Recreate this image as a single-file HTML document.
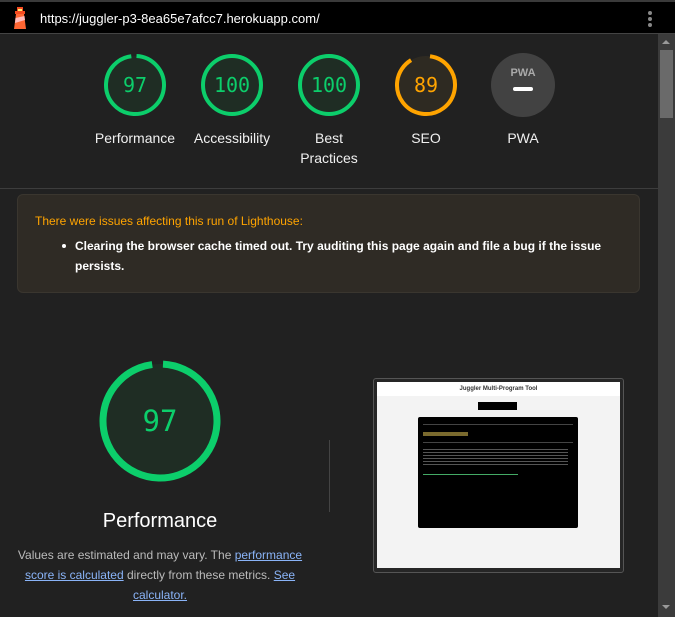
<!DOCTYPE html>
<html><head><meta charset="utf-8"><style>
*{margin:0;padding:0;box-sizing:border-box}
body{width:675px;height:617px;overflow:hidden;background:#212121;font-family:"Liberation Sans",Arial,sans-serif;position:relative;color:#eee}
.top{position:absolute;left:0;top:0;width:675px;height:34px;background:#000;border-top:2px solid #3a3a3a;border-bottom:1px solid #444}
.url{position:absolute;left:40px;top:9px;font-size:13px;color:#fff}
.g{position:absolute;top:53px;width:100px;text-align:center;font-size:14px;color:#f0f0f0;line-height:20px}
.g svg{display:block;margin:0 auto 11px}
.warn{position:absolute;left:17px;top:194px;width:623px;height:99px;background:#2f2b25;border:1px solid #3a362f;border-radius:6px}
a{color:#8ab4f8;text-decoration:underline}
</style></head><body>
<div class="top">
<svg style="position:absolute;left:11px;top:4px" width="18" height="24" viewBox="0 0 18 24"><rect x="6" y="1" width="6" height="4" fill="#f44b21"/><rect x="4" y="5" width="10" height="3" fill="#f44b21"/><rect x="7" y="3" width="4" height="2" fill="#fff176"/><path d="M5 8h8l2 15H3z" fill="#f63"/><path d="M4.5 12l9-2 .5 4-10 3z" fill="#fbb"/></svg>
<div class="url">https://juggler-p3-8ea65e7afcc7.herokuapp.com/</div>
<div style="position:absolute;left:648px;top:9px;width:4px"><div style="width:4px;height:4px;border-radius:2px;background:#888;margin-bottom:2px"></div><div style="width:4px;height:4px;border-radius:2px;background:#888;margin-bottom:2px"></div><div style="width:4px;height:4px;border-radius:2px;background:#888"></div></div>
</div>
<div style="position:absolute;left:658px;top:34px;width:17px;height:583px;background:#3b3b3b"></div>
<div style="position:absolute;left:660px;top:50px;width:13px;height:68px;background:#6a6a6a"></div>
<div style="position:absolute;left:662px;top:40px;width:0;height:0;border-left:4px solid transparent;border-right:4px solid transparent;border-bottom:4px solid #999"></div>
<div style="position:absolute;left:662px;top:605px;width:0;height:0;border-left:4px solid transparent;border-right:4px solid transparent;border-top:4px solid #999"></div>

<div class="g" style="left:85px"><svg width="64" height="64"><circle cx="32" cy="32" r="29" fill="#1f2d24"/><circle cx="32" cy="32" r="29" fill="none" stroke="#0cce6b" stroke-width="4" stroke-dasharray="176.7 182.2" transform="rotate(-87 32 32)"/><text x="32" y="39" text-anchor="middle" font-family="DejaVu Sans Mono,monospace" font-size="20" fill="#0cce6b">97</text></svg>Performance</div>
<div class="g" style="left:182px"><svg width="64" height="64"><circle cx="32" cy="32" r="29" fill="#1f2d24" stroke="#0cce6b" stroke-width="4"/><text x="32" y="39" text-anchor="middle" font-family="DejaVu Sans Mono,monospace" font-size="20" fill="#0cce6b">100</text></svg>Accessibility</div>
<div class="g" style="left:279px"><svg width="64" height="64"><circle cx="32" cy="32" r="29" fill="#1f2d24" stroke="#0cce6b" stroke-width="4"/><text x="32" y="39" text-anchor="middle" font-family="DejaVu Sans Mono,monospace" font-size="20" fill="#0cce6b">100</text></svg>Best<br>Practices</div>
<div class="g" style="left:376px"><svg width="64" height="64"><circle cx="32" cy="32" r="29" fill="#2e2a22"/><circle cx="32" cy="32" r="29" fill="none" stroke="#ffa400" stroke-width="4" stroke-dasharray="162.2 182.2" transform="rotate(-82 32 32)"/><text x="32" y="39" text-anchor="middle" font-family="DejaVu Sans Mono,monospace" font-size="20" fill="#ffa400">89</text></svg>SEO</div>
<div class="g" style="left:473px"><svg width="64" height="64"><circle cx="32" cy="32" r="32" fill="#424242"/><text x="32" y="23" text-anchor="middle" font-size="11" font-weight="bold" fill="#aaa">PWA</text><rect x="22" y="34" width="20" height="4" rx="2" fill="#fff"/></svg>PWA</div>

<div style="position:absolute;left:0;top:188px;width:658px;height:1px;background:#3d3d3d"></div>
<div class="warn">
<div style="position:absolute;left:17px;top:19px;font-size:12px;color:#ffa400">There were issues affecting this run of Lighthouse:</div>
<div style="position:absolute;left:57px;top:41px;width:560px;font-size:12px;font-weight:bold;color:#fff;line-height:20px">Clearing the browser cache timed out. Try auditing this page again and file a bug if the issue persists.</div>
<div style="position:absolute;left:44px;top:49px;width:4px;height:4px;border-radius:2px;background:#fff"></div>
</div>

<svg style="position:absolute;left:97px;top:358px" width="126" height="126"><circle cx="63" cy="63" r="57" fill="#1f2d24"/><circle cx="63" cy="63" r="57" fill="none" stroke="#0cce6b" stroke-width="7" stroke-dasharray="347 358.1" transform="rotate(-87 63 63)"/><text x="63" y="73" text-anchor="middle" font-family="DejaVu Sans Mono,monospace" font-size="29" fill="#0cce6b">97</text></svg>
<div style="position:absolute;left:0;top:510px;width:320px;text-align:center;font-size:20px;color:#fff">Performance</div>
<div style="position:absolute;left:10px;top:545px;width:300px;text-align:center;font-size:12px;color:#bbb;line-height:20px">Values are estimated and may vary. The <a>performance score is calculated</a> directly from these metrics. <a>See calculator.</a></div>
<div style="position:absolute;left:329px;top:440px;width:1px;height:72px;background:#444"></div>

<div style="position:absolute;left:373px;top:378px;width:251px;height:195px;background:#262626;border:1px solid #555;border-radius:3px"></div>
<div style="position:absolute;left:377px;top:382px;width:243px;height:186px;background:#f3f3f3">
<div style="height:14px;background:#fff;text-align:center;font-size:6px;font-weight:bold;color:#333;line-height:14px">Juggler Multi-Program Tool</div>
<div style="position:absolute;left:101px;top:20px;width:39px;height:8px;background:#000"></div>
<div style="position:absolute;left:41px;top:35px;width:160px;height:111px;background:#000;border-radius:2px">
<div style="margin:7px 5px 0;height:1px;background:#444"></div>
<div style="margin:7px 5px 0;width:45px;height:4px;background:#7a6a2e"></div>
<div style="margin:6px 5px 0;height:1px;background:#444"></div>
<div style="margin:6px 5px 0;width:145px;height:18px;background:repeating-linear-gradient(#555 0 1px,#000 1px 3px)"></div>
<div style="margin:7px 5px 0;width:95px;height:1px;background:#4a6"></div>
</div></div>
</body></html>
